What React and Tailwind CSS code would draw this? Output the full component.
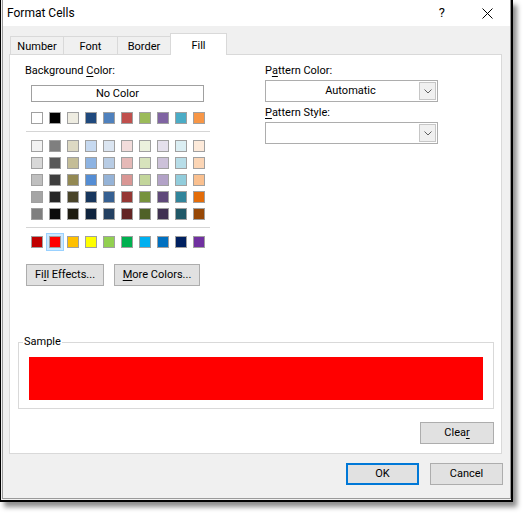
import React from 'react';

const themeRow = ['#FFFFFF', '#000000', '#EEECE1', '#1F497D', '#4F81BD', '#C0504D', '#9BBB59', '#8064A2', '#4BACC6', '#F79646'];

const tintRows = [
  ['#F2F2F2', '#7F7F7F', '#DDD9C3', '#C6D9F0', '#DBE5F1', '#F2DCDB', '#EBF1DD', '#E5E0EC', '#DBEEF3', '#FDEADA'],
  ['#D8D8D8', '#595959', '#C4BD97', '#8DB3E2', '#B8CCE4', '#E5B9B7', '#D7E3BC', '#CCC1D9', '#B7DDE8', '#FBD5B5'],
  ['#BFBFBF', '#3F3F3F', '#938953', '#548DD4', '#95B3D7', '#D99694', '#C3D69B', '#B2A2C7', '#92CDDC', '#FAC08F'],
  ['#A5A5A5', '#262626', '#494429', '#17365D', '#366092', '#953734', '#76923C', '#5F497A', '#31859B', '#E36C09'],
  ['#7F7F7F', '#0C0C0C', '#1D1B10', '#0F243E', '#244061', '#632423', '#4F6128', '#3F3151', '#205867', '#974806'],
];

const standardRow = ['#C00000', '#FF0000', '#FFC000', '#FFFF00', '#92D050', '#00B050', '#00B0F0', '#0070C0', '#002060', '#7030A0'];

// one row of color boxes, 12px each on an 18px step
const SwatchRow = ({ colors, selected }) => (
  <div className="flex gap-[6px] ml-[5px]">
    {colors.map((c, i) => (
      <div
        key={i}
        className={
          'w-3 h-3 border border-[#a0a0a0] shrink-0 ' +
          (i === selected ? 'shadow-[0_0_0_2px_#cce8ff,0_0_0_3px_#99d1ff]' : '')
        }
        style={{ backgroundColor: c }}
      />
    ))}
  </div>
);

const Button = ({ children, className = '' }) => (
  <button className={`h-[22px] bg-[#e1e1e1] border border-[#adadad] text-black flex items-center justify-center ${className}`}>
    {children}
  </button>
);

const Dropdown = ({ value }) => (
  <div className="w-[173px] h-[22px] bg-white border border-[#adadad] flex items-stretch">
    <div className="flex-1 flex items-center justify-center pl-[16px]">{value}</div>
    <div className="w-[17px] my-px mr-px bg-[#f0f0f0] border border-[#c6c6c6] flex items-center justify-center">
      <svg width="8" height="5" viewBox="0 0 8 5" fill="none" stroke="#606060" strokeWidth="1">
        <path d="M0.5 0.5 L4 4 L7.5 0.5" />
      </svg>
    </div>
  </div>
);

const Tab = ({ label, selected, width }) =>
  selected ? (
    <div className={`${width} h-[22px] bg-white border border-b-0 border-[#d9d9d9] flex items-start justify-center pt-[4px] relative z-10`}>
      {label}
    </div>
  ) : (
    <div className={`${width} h-[19px] border border-r-0 border-b-0 border-[#d9d9d9] flex items-center justify-center pt-px`}>
      {label}
    </div>
  );

const U = ({ children }) => <span className="underline underline-offset-[2px]">{children}</span>;

export default function App() {
  return (
    <div className="w-[527px] h-[516px] bg-white overflow-hidden font-['Roboto','Noto_Sans',sans-serif] text-[11px] leading-[16px] text-black">
      <div className="w-[513px] h-[502px] border-l border-r-2 border-b-2 border-black bg-[#f0f0f0] shadow-[4px_5px_5px_rgba(0,0,0,0.45)]">
        <div className="ml-px w-[509px] h-[499px] border-l border-r border-b border-[#9a9a9a] flex flex-col">
          {/* title bar */}
          <div className="h-[26px] bg-white flex items-center pl-[4px] shrink-0">
            <span className="text-[12px]">Format Cells</span>
            <span className="ml-auto text-[13px] mr-[37px]">?</span>
            <svg width="11" height="11" viewBox="0 0 11 11" stroke="#000" strokeWidth="1" className="mr-[17px]">
              <path d="M0.5 0.5 L10.5 10.5 M10.5 0.5 L0.5 10.5" />
            </svg>
          </div>

          {/* tabs */}
          <div className="mt-[7px] ml-[7px] flex items-end -mb-px">
            <Tab label="Number" width="w-[53px]" />
            <Tab label="Font" width="w-[54px]" />
            <Tab label="Border" width="w-[53px]" />
            <Tab label="Fill" width="w-[57px]" selected />
          </div>

          {/* tab page */}
          <div className="ml-[6px] w-[493px] h-[400px] bg-white border border-[#d9d9d9] flex flex-col">
            <div className="flex pt-[8px] pl-[16px]">
              <div className="w-[184px] flex flex-col">
                <div className="-ml-px h-[16px]">
                  Background <U>C</U>olor:
                </div>
                <div className="mt-[6px] ml-[5px] w-[173px] h-[17px] border border-[#a0a0a0] flex items-center justify-center">
                  No Color
                </div>
                <div className="mt-[10px]">
                  <SwatchRow colors={themeRow} />
                </div>
                <div className="mt-[7px] border-t border-[#d5d5d5]" />
                <div className="mt-[8px] flex flex-col gap-[5px]">
                  {tintRows.map((row, i) => (
                    <SwatchRow key={i} colors={row} />
                  ))}
                </div>
                <div className="mt-[7px] border-t border-[#d5d5d5]" />
                <div className="mt-[8px]">
                  <SwatchRow colors={standardRow} selected={1} />
                </div>
                <div className="mt-[16px] flex gap-[10px]">
                  <Button className="w-[78px]">
                    Fi<U>l</U>l Effects...
                  </Button>
                  <Button className="w-[86px]">
                    <U>M</U>ore Colors...
                  </Button>
                </div>
              </div>

              <div className="ml-[55px] flex flex-col">
                <div className="h-[16px]">
                  P<U>a</U>ttern Color:
                </div>
                <div className="mt-px">
                  <Dropdown value="Automatic" />
                </div>
                <div className="mt-[3px] h-[16px]">
                  <U>P</U>attern Style:
                </div>
                <div className="mt-px">
                  <Dropdown value="" />
                </div>
              </div>
            </div>

            {/* sample */}
            <div className="mt-[56px] ml-[8px] w-[476px] h-[67px] border border-[#d9d9d9] relative pt-[14px] pl-[10px]">
              <span className="absolute -top-[9px] left-[4px] bg-white px-px">Sample</span>
              <div className="w-[454px] h-[43px] bg-[#ff0000]" />
            </div>

            <div className="mt-[13px] ml-[410px]">
              <Button className="w-[74px]">
                Clea<U>r</U>
              </Button>
            </div>
          </div>

          {/* dialog buttons */}
          <div className="mt-[9px] flex justify-end gap-[11px] pr-[7px]">
            <button className="w-[73px] h-[22px] bg-[#e1e1e1] border-2 border-[#0078d7] flex items-center justify-center">
              OK
            </button>
            <Button className="w-[73px]">Cancel</Button>
          </div>
        </div>
      </div>
    </div>
  );
}
